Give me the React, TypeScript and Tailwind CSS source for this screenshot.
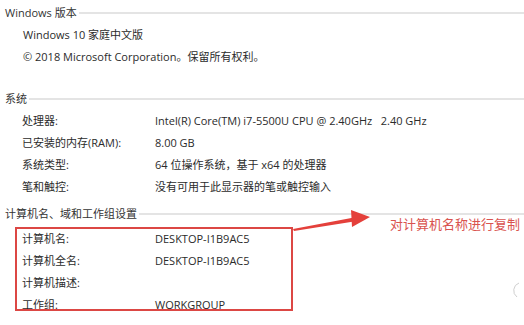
import React from 'react';

const font = { fontFamily: "'Open Sans', 'Noto Sans CJK SC', sans-serif" };

function SectionHeader({ title, className = '' }: { title: string; className?: string }) {
  return (
    <div className={`flex h-[22px] items-center pl-[5px] text-[11px] text-[#333] ${className}`}>
      <span className="shrink-0 pr-[2px]">{title}</span>
      <div className="h-[2px] flex-1 bg-[#e4e4e4]" />
    </div>
  );
}

function Row({ label, value }: { label: string; value?: string }) {
  return (
    <div className="flex h-[22px] items-center pl-[22px] text-[11px] text-[#2b2b2b]">
      <span className="w-[133px] shrink-0">{label}</span>
      {value ? <span className="whitespace-pre">{value}</span> : null}
    </div>
  );
}

function Line({ text }: { text: string }) {
  return <div className="flex h-[22px] items-center pl-[23px] text-[11px] text-[#2b2b2b]">{text}</div>;
}

export default function App() {
  return (
    <div className="relative h-[325px] w-[524px] overflow-hidden bg-white" style={font}>
      <div className="flex flex-col pt-[2px]">
        <SectionHeader title="Windows 版本" />
        <Line text="Windows 10 家庭中文版" />
        <Line text="© 2018 Microsoft Corporation。保留所有权利。" />

        <SectionHeader title="系统" className="mt-[20px]" />
        <Row label="处理器:" value="Intel(R) Core(TM) i7-5500U CPU @ 2.40GHz   2.40 GHz" />
        <Row label="已安装的内存(RAM):" value="8.00 GB" />
        <Row label="系统类型:" value="64 位操作系统，基于 x64 的处理器" />
        <Row label="笔和触控:" value="没有可用于此显示器的笔或触控输入" />

        <SectionHeader title="计算机名、域和工作组设置" className="mt-[5px]" />
        <div className="mt-[3px] flex flex-col">
          <Row label="计算机名:" value="DESKTOP-I1B9AC5" />
          <Row label="计算机全名:" value="DESKTOP-I1B9AC5" />
          <Row label="计算机描述:" />
          <Row label="工作组:" value="WORKGROUP" />
        </div>
      </div>

      {/* annotation */}
      <div className="absolute left-[15px] top-[227px] h-[84px] w-[278px] border-2 border-[#dc4744]" />
      <svg className="absolute left-0 top-0" width="524" height="325" viewBox="0 0 524 325">
        <polygon points="293,229 354,217.5 354,221.5 294,231" fill="#e4403b" />
        <polygon points="351,210 370,217 352,227" fill="#e4403b" />
        <path d="M519 283 a8 8 0 0 0 -2 14" fill="none" stroke="#cfcfcf" strokeWidth="1" />
      </svg>
      <div className="absolute left-[390px] top-[215px] text-[13px] text-[#d9534f]">对计算机名称进行复制</div>
    </div>
  );
}
